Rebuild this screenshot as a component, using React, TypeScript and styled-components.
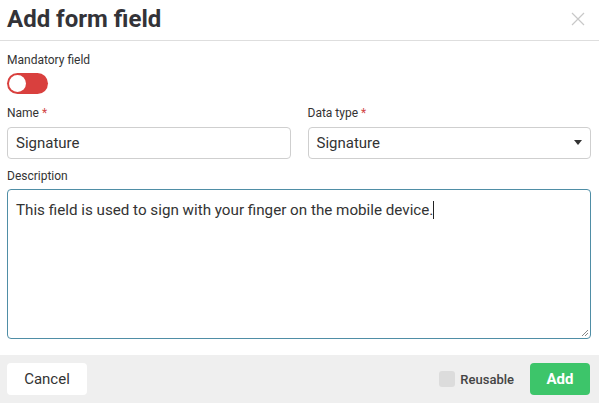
import React from "react";
import styled, { createGlobalStyle } from "styled-components";

const Global = createGlobalStyle`
  html, body { margin: 0; padding: 0; background: #fff; }
  body { font-family: Roboto, "Liberation Sans", sans-serif; color: #333; }
  * { box-sizing: border-box; }
`;

const Dialog = styled.div`
  width: 599px;
  height: 403px;
  display: flex;
  flex-direction: column;
  background: #fff;
`;

const Header = styled.div`
  height: 41px;
  display: flex;
  align-items: center;
  justify-content: space-between;
  padding: 0 14px 0 7px;
  border-bottom: 1px solid #dedede;
`;

const Title = styled.h1`
  margin: 0;
  font-size: 24px;
  font-weight: 700;
  color: #333338;
  line-height: 1;
  margin-top: -3px;
`;

const Close = styled.button`
  border: 0;
  background: none;
  padding: 0;
  width: 14px;
  height: 14px;
  margin-top: -2px;
  cursor: pointer;
  display: flex;
`;

const Body = styled.div`
  flex: 1;
  display: flex;
  flex-direction: column;
  padding: 11px 8px 0 7px;
`;

const Label = styled.div`
  font-size: 12px;
  color: #333;
  line-height: 16px;
  height: 16px;
  font-weight: 400;
`;

const Star = styled.span`
  color: #d24646;
`;

const Toggle = styled.div`
  margin-top: 5px;
  width: 41px;
  height: 21px;
  border-radius: 11px;
  background: #d9403e;
  padding: 2px;
  display: flex;
`;

const Knob = styled.div`
  width: 17px;
  height: 17px;
  border-radius: 50%;
  background: #fff;
`;

const Row = styled.div`
  display: grid;
  grid-template-columns: 1fr 1fr;
  column-gap: 17px;
  margin-top: 11px;
`;

const Field = styled.div`
  display: flex;
  flex-direction: column;
  gap: 6px;
`;

const Input = styled.div`
  height: 32px;
  border: 1px solid #cfcfcf;
  border-radius: 4px;
  display: flex;
  align-items: center;
  justify-content: space-between;
  padding: 0 8px 1px 8px;
  font-size: 15px;
  color: #333;
`;

const Caret = styled.span`
  width: 0;
  height: 0;
  border-left: 4.5px solid transparent;
  border-right: 4.5px solid transparent;
  border-top: 5px solid #333;
`;

const DescField = styled(Field)`
  margin-top: 9px;
  gap: 5px;
`;

const TextArea = styled.div`
  position: relative;
  height: 150px;
  border: 1px solid #4f8ea6;
  border-radius: 4px;
  padding: 10px 8px;
  font-size: 15.2px;
  color: #333;
  line-height: 20px;
`;

const Cursor = styled.span`
  display: inline-block;
  width: 1px;
  height: 18px;
  background: #222;
  vertical-align: -4px;
`;

const Grip = styled.svg`
  position: absolute;
  right: 1px;
  bottom: 1px;
`;

const Footer = styled.div`
  height: 48px;
  background: #efefef;
  display: flex;
  align-items: center;
  padding: 0 9px 0 7px;
`;

const Button = styled.button<{ $primary?: boolean }>`
  height: 32px;
  border: 0;
  border-radius: 4px;
  font-family: Roboto, "Liberation Sans", sans-serif;
  font-size: 15px;
  font-weight: ${(p) => (p.$primary ? 700 : 400)};
  background: ${(p) => (p.$primary ? "#3dc56a" : "#fff")};
  color: ${(p) => (p.$primary ? "#fff" : "#333")};
  padding: 0;
  width: ${(p) => (p.$primary ? "60px" : "80px")};
`;

const Spacer = styled.div`
  flex: 1;
`;

const Check = styled.label`
  display: flex;
  align-items: center;
  gap: 5px;
  font-size: 13px;
  font-weight: 500;
  color: #444;
  margin-right: 16px;
`;

const Box = styled.span`
  width: 16px;
  height: 16px;
  border-radius: 3px;
  background: #dcdcdc;
`;

export default function App() {
  return (
    <>
      <Global />
      <Dialog>
        <Header>
          <Title>Add form field</Title>
          <Close aria-label="Close">
            <svg width="14" height="14" viewBox="0 0 14 14">
              <path d="M1 1 L13 13 M13 1 L1 13" stroke="#c8c8c8" strokeWidth="1.2" />
            </svg>
          </Close>
        </Header>
        <Body>
          <Label>Mandatory field</Label>
          <Toggle>
            <Knob />
          </Toggle>
          <Row>
            <Field>
              <Label>
                Name <Star>*</Star>
              </Label>
              <Input>Signature</Input>
            </Field>
            <Field>
              <Label>
                Data type <Star>*</Star>
              </Label>
              <Input>
                Signature
                <Caret />
              </Input>
            </Field>
          </Row>
          <DescField>
            <Label>Description</Label>
            <TextArea>
              This field is used to sign with your finger on the mobile device.
              <Cursor />
              <Grip width="10" height="10" viewBox="0 0 10 10">
                <path d="M9 3 L3 9 M9 6 L6 9" stroke="#888" strokeWidth="1" />
              </Grip>
            </TextArea>
          </DescField>
        </Body>
        <Footer>
          <Button>Cancel</Button>
          <Spacer />
          <Check>
            <Box />
            Reusable
          </Check>
          <Button $primary>Add</Button>
        </Footer>
      </Dialog>
    </>
  );
}
